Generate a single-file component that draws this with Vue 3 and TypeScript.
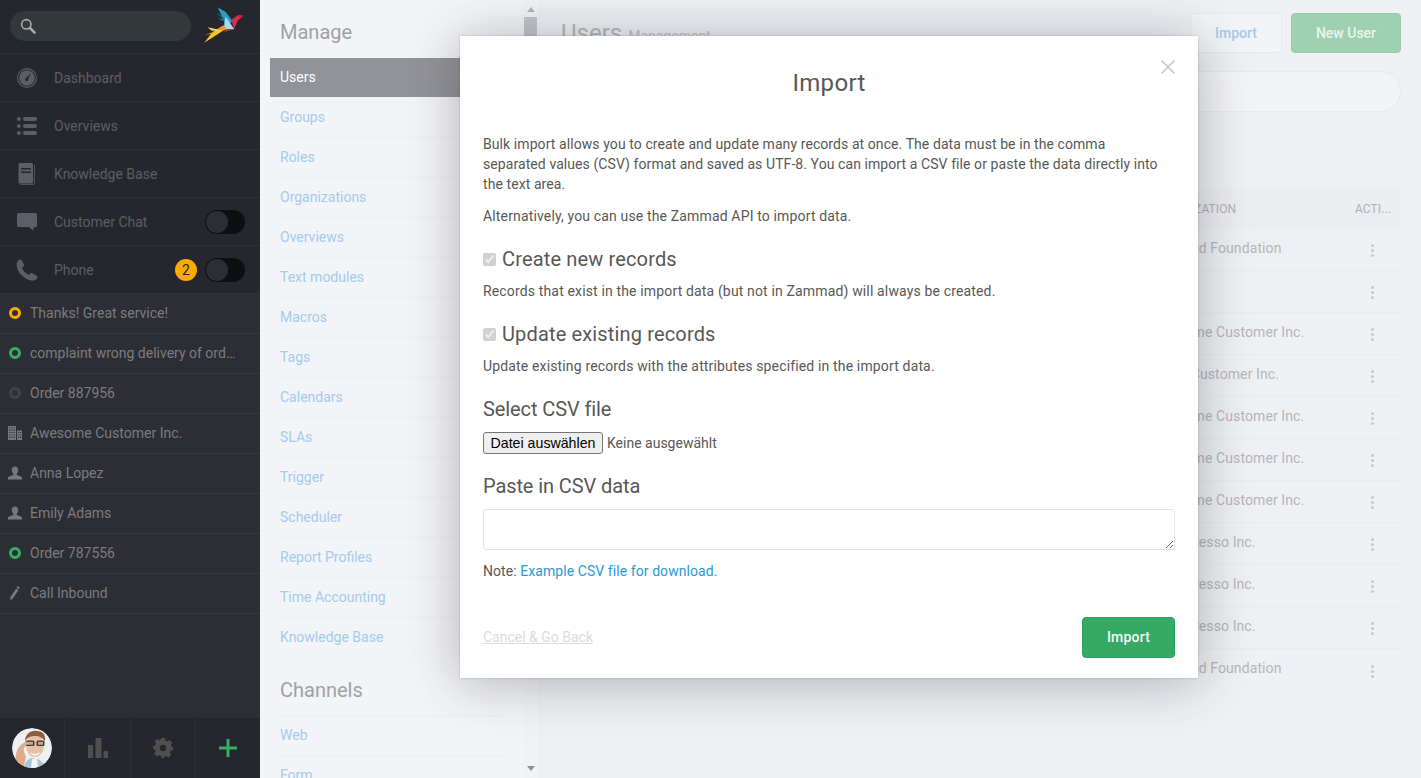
<script setup lang="ts">
interface NavItem { label: string; icon: string; toggle?: boolean; badge?: string }
interface TaskItem { label: string; kind: 'ring' | 'icon'; tone?: string; icon?: string }

const navItems: NavItem[] = [
  { label: 'Dashboard', icon: 'i-gauge' },
  { label: 'Overviews', icon: 'i-list' },
  { label: 'Knowledge Base', icon: 'i-book' },
  { label: 'Customer Chat', icon: 'i-chat', toggle: true },
  { label: 'Phone', icon: 'i-phone', toggle: true, badge: '2' },
]
const tasks: TaskItem[] = [
  { label: 'Thanks! Great service!', kind: 'ring', tone: 'pending' },
  { label: 'complaint wrong delivery of order 4711', kind: 'ring', tone: 'open' },
  { label: 'Order 887956', kind: 'ring', tone: 'closed' },
  { label: 'Awesome Customer Inc.', kind: 'icon', icon: 'i-org' },
  { label: 'Anna Lopez', kind: 'icon', icon: 'i-person' },
  { label: 'Emily Adams', kind: 'icon', icon: 'i-person' },
  { label: 'Order 787556', kind: 'ring', tone: 'open' },
  { label: 'Call Inbound', kind: 'icon', icon: 'i-pen' },
]
const manage = ['Users', 'Groups', 'Roles', 'Organizations', 'Overviews', 'Text modules', 'Macros', 'Tags', 'Calendars', 'SLAs', 'Trigger', 'Scheduler', 'Report Profiles', 'Time Accounting', 'Knowledge Base']
const channels = ['Web', 'Form']
const orgs: string[] = [
  'Zammad Foundation',
  '',
  'Awesome Customer Inc.',
  'Prime Customer Inc.',
  'Awesome Customer Inc.',
  'Awesome Customer Inc.',
  'Awesome Customer Inc.',
  'Mr Espresso Inc.',
  'Mr Espresso Inc.',
  'Mr Espresso Inc.',
  'Zammad Foundation',
]
</script>

<template>
  <div class="app">
    <svg class="defs" aria-hidden="true">
      <symbol id="i-gauge" viewBox="0 0 20 20">
        <circle cx="10" cy="10" r="9.400" fill="none" stroke="currentColor" stroke-width="1.100" />
        <path fill-rule="evenodd" fill="currentColor" d="M10 2.200a7.800 7.800 0 1 0 0 15.600 7.800 7.800 0 0 0 0-15.600zM14.200 4.800l-3 6.300a1.600 1.600 0 1 1-2-1.100z" />
      </symbol>
      <symbol id="i-list" viewBox="0 0 20 18">
        <g fill="currentColor">
          <circle cx="1.900" cy="2" r="1.900" /><circle cx="1.900" cy="9" r="1.900" /><circle cx="1.900" cy="16" r="1.900" />
          <rect x="6" y="0" width="14" height="4" rx="2" /><rect x="6" y="7" width="14" height="4" rx="2" /><rect x="6" y="14" width="14" height="4" rx="2" />
        </g>
      </symbol>
      <symbol id="i-book" viewBox="0 0 17 22">
        <path fill="currentColor" fill-rule="evenodd" d="M1.500 0H13q1.500 0 1.500 1.500V19q0 1.500-1.500 1.500H1.500Q0 20.500 0 19V1.500Q0 0 1.500 0zM2.500 5v1.500h10V5zM2.500 8.500V10h10V8.500z" />
        <path fill="none" stroke="currentColor" stroke-width="0.800" d="M16 2v18q0 1.500-1.500 1.500H2" />
      </symbol>
      <symbol id="i-chat" viewBox="0 0 20 18">
        <path fill="currentColor" d="M1.500 0h17Q20 0 20 1.500v11q0 1.500-1.500 1.500H17l-1 3.500-4-3.500H1.500Q0 14 0 12.500v-11Q0 0 1.500 0z" />
      </symbol>
      <symbol id="i-phone" viewBox="0 0 22 22">
        <path fill="currentColor" d="M3 .8C4 .1 5 .3 5.600 1.200L8 5.600C8.400 6.400 8.200 7.100 7.500 7.600L5.900 8.800C6.900 11.800 10 15 13 16.100L14.200 14.600C14.800 13.900 15.500 13.800 16.300 14.200L20.800 16.800C21.700 17.400 21.900 18.400 21.200 19.200 19.800 21 17.600 22 15 21.500 7.500 20 1.500 13 .8 7.500.4 4.800 1 2.400 3 .8z" />
      </symbol>
      <symbol id="i-org" viewBox="0 0 14 14">
        <path fill="currentColor" fill-rule="evenodd" d="M0 0h8v14H0zM1.200 1.200v1.100h1.100V1.200zM3.400 1.200v1.100h1.100V1.200zM5.600 1.200v1.100h1.100V1.200zM1.200 3.600v1.100h1.100V3.600zM3.400 3.600v1.100h1.100V3.600zM5.600 3.600v1.100h1.100V3.600zM1.200 6v1.100h1.100V6zM3.400 6v1.100h1.100V6zM5.600 6v1.100h1.100V6zM1.200 8.400v1.100h1.100V8.400zM3.400 8.400v1.100h1.100V8.400zM5.600 8.400v1.100h1.100V8.400zM1.200 10.800v1.100h1.100v-1.100zM3.400 10.800v1.100h1.100v-1.100zM5.600 10.800v1.100h1.100v-1.100z" />
        <path fill="currentColor" fill-rule="evenodd" d="M9 4.500h5V14H9zM10.200 6v1.100h1v-1.100zM12 6v1.100h1v-1.100zM10.200 8.400v1.100h1V8.400zM12 8.400v1.100h1V8.400zM10.200 10.800v1.100h1v-1.100zM12 10.800v1.100h1v-1.100z" />
      </symbol>
      <symbol id="i-person" viewBox="0 0 14 13">
        <path fill="currentColor" d="M7 0c2 0 3.200 1.400 3.200 3.500 0 1.600-.7 3-1.500 3.800v1.100c1.800.6 4.600 1.400 5.300 2.400V13H0v-2.200c.7-1 3.500-1.800 5.300-2.400V7.300C4.500 6.500 3.800 5.100 3.800 3.500 3.800 1.400 5 0 7 0z" />
      </symbol>
      <symbol id="i-pen" viewBox="0 0 12 14">
        <path fill="currentColor" d="M8.600 0 11 1.600 10 3.200 7.600 1.600zM7.200 2.400 9.600 4 3.600 12.800 1 14l.3-2.800z" />
      </symbol>
      <symbol id="i-gear" viewBox="0 0 20 20">
        <path fill="currentColor" fill-rule="evenodd" d="M8 0h4l.5 2.700 1.700.7L16.500 2l2.800 2.900-1.500 2.200.7 1.700L20 9v3l-2.500.7-.7 1.700 1.500 2.200-2.800 2.900-2.300-1.500-1.700.7L11.500 20h-3l-.5-2.300-1.700-.7-2.300 1.500L1.200 15.600l1.500-2.200L2 11.700 0 11V8l2.300-.5.7-1.700L1.500 3.600 4.400 1l2 1.300 1.200-.5zM10 6.800a3.200 3.200 0 1 0 0 6.400 3.200 3.200 0 0 0 0-6.400z" />
      </symbol>
    </svg>

    <nav class="nav">
      <div class="nav-top">
        <div class="nav-search">
          <svg class="search-icon" viewBox="0 0 16 16">
            <circle cx="6.300" cy="6.300" r="4.700" fill="none" stroke="currentColor" stroke-width="1.600" />
            <path d="M10 10l4.600 4.600" stroke="currentColor" stroke-width="2.600" stroke-linecap="round" />
          </svg>
        </div>
        <svg class="logo" viewBox="0 0 165 150">
          <polygon points="68,22 92,36 112,62 92,88 85,58" fill="#2a9cc4" />
          <polygon points="62,38 85,50 86,56" fill="#1c7c9c" />
          <polygon points="66,55 85,57 86,63" fill="#1c7c9c" />
          <polygon points="92,50 118,88 86,88" fill="#a9d9ec" />
          <polygon points="108,60 130,45 145,47 128,62 118,86" fill="#d92c55" />
          <polygon points="130,45 145,47 132,55" fill="#c22b2b" />
          <polygon points="118,88 96,88 86,96" fill="#b9392c" />
          <polygon points="85,76 96,88 80,94 62,90" fill="#ef9a23" />
          <polygon points="28,128 84,92 62,88 46,104" fill="#f8c52f" />
          <polygon points="38,82 76,90 50,92" fill="#f3d672" />
          <polygon points="28,106 60,94 56,100" fill="#d9a92a" />
        </svg>
      </div>
      <a v-for="item in navItems" :key="item.label" class="nav-row">
        <svg class="nav-icon" :class="item.icon"><use :href="'#' + item.icon" /></svg>
        <span class="nav-label">{{ item.label }}</span>
        <span v-if="item.badge" class="badge">{{ item.badge }}</span>
        <span v-if="item.toggle" class="toggle"><span class="knob"></span></span>
      </a>
      <div class="tasks">
        <a v-for="task in tasks" :key="task.label" class="task-row">
          <span class="task-icon">
            <span v-if="task.kind === 'ring'" class="ring" :class="task.tone"></span>
            <svg v-else class="task-svg"><use :href="'#' + task.icon" /></svg>
          </span>
          <span class="task-label">{{ task.label }}</span>
        </a>
      </div>
      <div class="nav-bottom">
        <div class="bottom-cell avatar-cell">
          <svg class="avatar" viewBox="0 0 40 40">
            <defs><clipPath id="avatar-clip"><circle cx="20" cy="20" r="20" /></clipPath></defs>
            <g clip-path="url(#avatar-clip)">
              <rect width="40" height="40" fill="#eef0f3" />
              <path d="M12 40c1-7 5-10 9-10s11 3 12 10z" fill="#a9c4d8" />
              <path d="M19 40l1-9 5-1 1 10z" fill="#f3f4f5" />
              <ellipse cx="23" cy="18" rx="9" ry="11" fill="#e8c0a6" />
              <path d="M13 13c0-7 6-11 12-10 6 0 9 4 8 10-3-3-5-5-10-5-4 0-7 1-10 5z" fill="#8b6140" />
              <rect x="13.500" y="12.500" width="9" height="5.500" rx="1.500" fill="#3d3a3a" />
              <rect x="24.500" y="12.500" width="8" height="5.500" rx="1.500" fill="#3d3a3a" />
              <rect x="15" y="13.800" width="6" height="3" fill="#c9a58f" />
              <rect x="26" y="13.800" width="5" height="3" fill="#c9a58f" />
              <path d="M18 24c3 2.500 7 2.500 10 0-1 4-8 5-10 0z" fill="#fff" />
              <path d="M4 36c-1-7 0-13 3-17 2-2 6-6 8-5 1 1-1 4-3 6-1 3 1 6 2 9l-2 9z" fill="#e0ac8d" />
            </g>
          </svg>
        </div>
        <div class="bottom-cell stats">
          <svg class="bars" viewBox="0 0 20 20"><path fill="currentColor" d="M0 7h5v13H0zM7.500 0h6v20h-6zM15.500 13H20v7h-4.500z" /></svg>
        </div>
        <div class="bottom-cell stats">
          <svg class="gear"><use href="#i-gear" /></svg>
        </div>
        <div class="bottom-cell plus-cell">
          <svg class="plus" viewBox="0 0 18 18"><path d="M9 0v18M0 9h18" stroke="currentColor" stroke-width="3" /></svg>
        </div>
      </div>
    </nav>

    <aside class="sidebar">
      <div class="side-scroll">
        <h2 class="side-title">Manage</h2>
        <div class="side-group">
          <a v-for="(item, i) in manage" :key="item" class="side-link" :class="{ active: i === 0 }">{{ item }}</a>
        </div>
        <h2 class="side-title channels">Channels</h2>
        <div class="side-group open">
          <a v-for="item in channels" :key="item" class="side-link">{{ item }}</a>
        </div>
      </div>
      <div class="scrollbar">
        <span class="arrow up"></span>
        <span class="thumb"></span>
        <span class="arrow down"></span>
      </div>
    </aside>

    <main class="main">
      <header class="main-head">
        <h1 class="main-title">Users <small>Management</small></h1>
        <div class="head-actions">
          <button class="btn-ghost">Import</button>
          <button class="btn-new">New User</button>
        </div>
      </header>
      <div class="main-search"></div>
      <div class="table">
        <div class="thead">
          <span></span><span>Organization</span><span>Acti...</span>
        </div>
        <div v-for="(org, i) in orgs" :key="i" class="tr">
          <span></span><span>{{ org }}</span>
          <span class="kebab"><i></i><i></i><i></i></span>
        </div>
      </div>
    </main>

    <div class="overlay">
      <section class="modal">
        <button class="close" aria-label="Close">
          <svg viewBox="0 0 14 14"><path d="M.5.500l13 13M13.500.500l-13 13" stroke="currentColor" stroke-width="1.600" /></svg>
        </button>
        <h1 class="modal-title">Import</h1>
        <div class="modal-body">
          <p class="intro">Bulk import allows you to create and update many records at once. The data must be in the comma separated values (CSV) format and saved as UTF-8. You can import a CSV file or paste the data directly into the text area.</p>
          <p class="alt">Alternatively, you can use the Zammad API to import data.</p>
          <label class="check"><input type="checkbox" checked disabled /> Create new records</label>
          <p class="desc">Records that exist in the import data (but not in Zammad) will always be created.</p>
          <label class="check second"><input type="checkbox" checked disabled /> Update existing records</label>
          <p class="desc">Update existing records with the attributes specified in the import data.</p>
          <h3 class="field-title">Select CSV file</h3>
          <div class="file-row">
            <button class="file-btn">Datei auswählen</button>
            <span>Keine ausgewählt</span>
          </div>
          <h3 class="field-title paste">Paste in CSV data</h3>
          <textarea class="csv"></textarea>
          <p class="note">Note: <a>Example CSV file for download.</a></p>
        </div>
        <footer class="modal-foot">
          <a class="cancel">Cancel &amp; Go Back</a>
          <button class="btn-import">Import</button>
        </footer>
      </section>
    </div>
  </div>
</template>

<style>
html, body { margin: 0; background: #eff0f4; }
</style>

<style scoped>
* { box-sizing: border-box; }
.app {
  position: relative;
  display: flex;
  width: 1421px;
  height: 778px;
  overflow: hidden;
  font: 14px/20px Roboto, "Noto Sans", sans-serif;
  color: #585856;
}
.defs { position: absolute; width: 0; height: 0; }

/* left navigation */
.nav {
  width: 260px;
  flex: none;
  display: flex;
  flex-direction: column;
  background: #26272e;
}
.nav-top {
  height: 54px;
  display: flex;
  align-items: flex-start;
  justify-content: space-between;
  padding: 11px 10px 0 10px;
  border-bottom: 1px solid #2f3037;
}
.nav-search {
  width: 181px;
  height: 30px;
  border-radius: 15px;
  background: #33383b;
  display: flex;
  align-items: center;
  padding-left: 10px;
  color: #a8aaa9;
}
.search-icon { width: 16px; height: 16px; }
.logo { width: 55px; height: 50px; margin-top: -11px; }
.nav-row {
  height: 48px;
  flex: none;
  display: flex;
  align-items: center;
  padding: 0 15px 0 17px;
  border-bottom: 1px solid #2f3037;
  color: #5c5e64;
}
.nav-icon { width: 20px; height: 22px; color: #5b5e66; flex: none; }
.nav-icon.i-phone { width: 22px; margin: 0 -1px; }
.nav-label { margin-left: 17px; flex: 1; }
.badge {
  width: 22px;
  height: 22px;
  border-radius: 50%;
  background: #faab00;
  color: #26272e;
  text-align: center;
  line-height: 22px;
  margin-right: 8px;
}
.toggle {
  width: 40px;
  height: 24px;
  border-radius: 12px;
  background: #0e0f11;
  padding: 1px;
  display: block;
}
.knob {
  display: block;
  width: 22px;
  height: 22px;
  border-radius: 50%;
  background: #2d2e35;
}
.tasks { flex: 1; background: #2d2e35; }
.task-row {
  height: 40px;
  display: flex;
  align-items: center;
  border-bottom: 1px solid #383940;
  padding: 0 20px 2px 0;
  color: #7b7c7f;
}
.task-icon {
  width: 30px;
  flex: none;
  display: flex;
  justify-content: center;
  color: #77787b;
}
.ring {
  width: 12px;
  height: 12px;
  border-radius: 50%;
  border: 3px solid currentColor;
}
.ring.pending { color: #faab00; }
.ring.open { color: #36ae63; }
.ring.closed { color: #404249; }
.task-svg { width: 14px; height: 14px; }
.task-label {
  flex: 1;
  min-width: 0;
  overflow: hidden;
  white-space: nowrap;
  text-overflow: ellipsis;
}
.nav-bottom {
  height: 60px;
  flex: none;
  display: flex;
  background: #26272e;
}
.bottom-cell {
  display: flex;
  align-items: center;
  justify-content: center;
  border-right: 1px solid #2f3037;
  color: #4f4f4f;
}
.avatar-cell { width: 65px; padding-right: 1px; }
.stats { width: 66px; }
.stats + .stats { width: 65px; }
.plus-cell { flex: 1; border-right: 0; color: #36ae63; }
.avatar { width: 40px; height: 40px; border-radius: 50%; filter: blur(.6px); }
.bars, .gear { width: 20px; height: 20px; }
.plus { width: 18px; height: 18px; }

/* admin sidebar */
.sidebar {
  width: 280px;
  flex: none;
  display: flex;
  background: #f3f4f7;
}
.side-scroll {
  width: 262px;
  flex: none;
  padding: 0 20px 0 10px;
}
.side-title {
  margin: 20px 0 0 10px;
  height: 38px;
  font-size: 20px;
  line-height: 24px;
  font-weight: 400;
  color: #9fa2a6;
}
.side-title.channels { height: 37px; }
.side-link {
  display: block;
  height: 40px;
  line-height: 38px;
  margin-left: 10px;
  border-bottom: 1px solid #ebedf0;
  color: #a3cbee;
}
.side-group > .side-link:last-child { border-bottom-color: transparent; }
.side-link.active {
  margin-left: 0;
  margin-right: -40px;
  margin-bottom: 1px;
  height: 39px;
  padding-left: 10px;
  background: #929398;
  color: #fff;
  border-bottom: 0;
}
.side-group.open { margin-left: 10px; border-top: 1px solid #ebedf0; }
.side-group.open .side-link { margin-left: 0; }
.scrollbar {
  width: 18px;
  flex: none;
  display: flex;
  flex-direction: column;
  align-items: center;
  background: #f1f2f5;
  border-right: 1px solid #e8e9ed;
  padding: 7px 0 5px;
}
.thumb {
  width: 13px;
  height: 300px;
  margin-top: 5px;
  background: #c3c4c9;
}
.arrow { width: 0; height: 0; border: 4px solid transparent; }
.arrow.up { border-bottom: 5px solid #b4b5ba; border-top: 0; }
.arrow.down { margin-top: auto; border-top: 5px solid #8f9095; border-bottom: 0; margin-bottom: 2px; }

/* main area */
.main {
  flex: 1;
  min-width: 0;
  padding: 13px 20px 0;
  background: #eff0f4;
}
.main-head {
  display: flex;
  justify-content: space-between;
  align-items: flex-start;
  height: 40px;
}
.main-title {
  margin: 5px 0 0 1px;
  font-size: 24px;
  line-height: 30px;
  font-weight: 400;
  color: #b5b7ba;
}
.main-title small { font-size: 14px; color: #c0c2c5; }
.head-actions { display: flex; gap: 9px; }
.btn-ghost, .btn-new {
  height: 40px;
  border-radius: 4px;
  font: 500 14px/20px Roboto, sans-serif;
}
.btn-ghost {
  width: 92px;
  background: #f3f4f7;
  border: 1px solid #e8e9ec;
  color: #a3cbee;
}
.btn-new {
  width: 110px;
  background: #9fd0b0;
  border: 1px solid #98cba9;
  color: #eaf4ee;
}
.main-search {
  height: 41px;
  margin-top: 18px;
  background: #f3f4f7;
  border: 1px solid #e9eaed;
  border-radius: 21px;
}
.table { margin-top: 77px; }
.thead, .tr {
  display: grid;
  grid-template-columns: 580px 205px 56px;
}
.thead {
  height: 40px;
  background: #ecedf0;
  align-items: center;
  font-size: 12px;
  letter-spacing: .1px;
  text-transform: uppercase;
  color: #b0b1b5;
}
.thead span, .tr span { padding-left: 10px; white-space: nowrap; }
.tr {
  height: 42px;
  align-items: center;
  padding-bottom: 4px;
  border-bottom: 1px solid #eaebef;
  color: #b5b6b9;
  letter-spacing: .1px;
}
.tr:last-child { border-bottom: 0; }
.tr .kebab {
  display: flex;
  flex-direction: column;
  align-items: center;
  gap: 2px;
  padding: 6px 0 0;
  width: 54px;
}
.kebab i { width: 3px; height: 3px; border-radius: 50%; background: #c7c8cb; }

/* modal */
.overlay {
  position: absolute;
  inset: 0;
  padding: 36px 0 0 460px;
}
.modal {
  position: relative;
  width: 738px;
  height: 642px;
  background: #fff;
  box-shadow: 0 4px 50px rgba(40, 44, 52, .33), 0 0 2px rgba(40, 44, 52, .25);
  padding: 0 23px;
  display: flex;
  flex-direction: column;
}
.close {
  position: absolute;
  top: 24px;
  right: 23px;
  width: 14px;
  height: 14px;
  padding: 0;
  border: 0;
  background: none;
  color: #cbcbcb;
}
.close svg { display: block; width: 14px; height: 14px; }
.modal-title {
  margin: 32px 0 0;
  text-align: center;
  font-size: 24px;
  line-height: 30px;
  font-weight: 400;
  letter-spacing: .3px;
  color: #585856;
}
.modal-body { flex: 1; }
.modal-body p { margin: 0; letter-spacing: .15px; }
.modal-body .intro { margin-top: 36px; letter-spacing: .08px; max-width: 680px; }
.modal-body .alt { margin-top: 12px; }
.check {
  display: flex;
  align-items: center;
  gap: 6px;
  margin-top: 21px;
  font-size: 20px;
  line-height: 24px;
  letter-spacing: .15px;
}
.modal-body .desc { margin-top: 10px; }
.field-title {
  margin: 21px 0 0;
  font-size: 20px;
  line-height: 24px;
  font-weight: 400;
  letter-spacing: -.1px;
}
.check input { margin: 0; width: 13px; height: 13px; flex: none; }
.file-row {
  display: flex;
  align-items: center;
  gap: 4px;
  margin-top: 11px;
  height: 22px;
}
.file-btn {
  width: 120px;
  height: 22px;
  padding: 0;
  background: #efefef;
  border: 1px solid #767676;
  border-radius: 3px;
  font: 14.2px "Liberation Sans", Arial, sans-serif;
  color: #000;
}
.field-title.paste { margin-top: 20px; }
.csv {
  display: block;
  width: 100%;
  height: 41px;
  margin-top: 11px;
  border: 1px solid #e2e2e2;
  border-radius: 3px;
  background: #fff;
}
.modal-body .note { margin-top: 11px; letter-spacing: .07px; }
.note a { color: #2b98d6; }
.modal-foot {
  display: flex;
  justify-content: space-between;
  align-items: center;
  height: 41px;
  margin-bottom: 20px;
}
.cancel { color: #dcdcdc; text-decoration: underline; margin-top: -2px; }
.btn-import {
  width: 93px;
  height: 41px;
  padding: 0 0 2px;
  background: #36a964;
  border: 1px solid #2f9d5b;
  border-radius: 4px;
  color: #f4faf6;
  font: 500 14px/20px Roboto, sans-serif;
  letter-spacing: .2px;
}
</style>
